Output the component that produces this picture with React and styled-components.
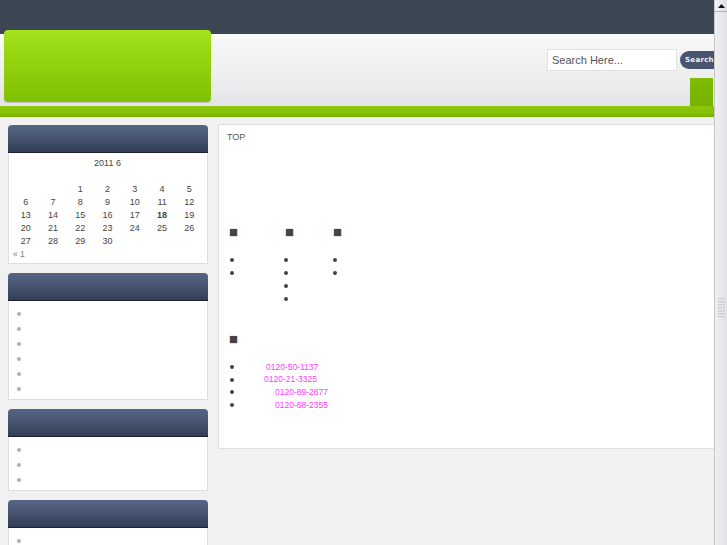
import styled, { createGlobalStyle } from "styled-components";

const GlobalStyle = createGlobalStyle`
    html, body {
        margin: 0;
        padding: 0;
        overflow: hidden;
    }
    body {
        font-family: "Liberation Sans", Arial, sans-serif;
        background: #f1f1f1;
    }
`;

const Page = styled.div`
    display: flex;
    height: 100vh;
`;

const Site = styled.div`
    flex: 1;
    min-width: 0;
    overflow: hidden;
    background: #f1f1f1;
`;

const TopBar = styled.div`
    height: 34px;
    background: #3d4754;
`;

const Header = styled.div`
    height: 72px;
    display: flex;
    justify-content: space-between;
    background: linear-gradient(to bottom, #f9f9f9 0%, #f0f0f1 50%, #e4e4e6 100%);
`;

const Logo = styled.div`
    width: 207px;
    height: 72px;
    margin: -4px 0 0 4px;
    border-radius: 4px;
    background: linear-gradient(to bottom, #a3e31d 0%, #92d20e 45%, #80c003 100%);
    box-shadow: 0 1px 1px rgba(0, 0, 0, 0.15);
`;

const HeaderRight = styled.div`
    display: flex;
    flex-direction: column;
    justify-content: space-between;
    align-items: flex-end;
`;

const SearchRow = styled.form`
    display: flex;
    align-items: center;
    gap: 3px;
    margin: 15px -10px 0 0;
`;

const SearchInput = styled.input`
    box-sizing: border-box;
    width: 130px;
    height: 22px;
    padding: 0 4px;
    border: 1px solid #e2e2e2;
    background: #fff;
    font-family: "Liberation Sans", Arial, sans-serif;
    font-size: 11px;
    color: #555;
    outline: none;

    &::placeholder {
        color: #555;
    }
`;

const SearchButton = styled.button`
    height: 18px;
    width: 44px;
    padding: 0 0 0 5px;
    border: none;
    border-radius: 9px;
    background: #495570;
    color: #f2f2f2;
    font-family: "DejaVu Sans", Verdana, sans-serif;
    font-size: 7px;
    font-weight: bold;
    letter-spacing: 0.3px;
    text-align: left;
`;

const NavTab = styled.div`
    width: 23px;
    height: 28px;
    margin-right: 1px;
    background: linear-gradient(to bottom, #80bc04, #76b200);
`;

const GreenStripe = styled.div`
    height: 11px;
    background: linear-gradient(to bottom, #8ec60c 0%, #86c008 60%, #74ad00 100%);
`;

const Body = styled.div`
    display: flex;
    align-items: flex-start;
    gap: 10px;
    padding: 7px 0 0 8px;
`;

const Sidebar = styled.div`
    width: 200px;
    flex-shrink: 0;
    display: flex;
    flex-direction: column;
    gap: 9px;
    padding-top: 1px;
`;

const Widget = styled.div`
    border: 1px solid #dedede;
    border-top: none;
    border-radius: 4px 4px 0 0;
    background: #fff;
`;

const WidgetHead = styled.div`
    height: 27px;
    margin: 0 -1px;
    border-radius: 4px 4px 0 0;
    background: linear-gradient(to bottom, #566686 0%, #45536f 50%, #313d55 100%);
    border-bottom: 1px solid #1c2230;
`;

const Calendar = styled.div`
    padding: 4px 4px 2px 3px;
    font-size: 9px;
    color: #444;
`;

const Caption = styled.div`
    text-align: center;
    line-height: 13px;
`;

const DayGrid = styled.div`
    display: grid;
    grid-template-columns: repeat(7, 1fr);
    line-height: 13px;
    text-align: center;
`;

const Day = styled.span`
    font-weight: ${(p) => (p.$today ? "bold" : "normal")};
`;

const PrevLink = styled.div`
    line-height: 13px;
    padding-left: 1px;
    color: #777;
    font-size: 8.5px;
`;

const LinkList = styled.ul`
    list-style: none;
    margin: 0;
    padding: 6px 0 2px 0;
`;

const LinkItem = styled.li`
    height: 15px;
    position: relative;

    &::before {
        content: "";
        position: absolute;
        left: 8px;
        top: 5px;
        width: 4px;
        height: 4px;
        border-radius: 50%;
        background: #b0b0b0;
    }
`;

const Content = styled.div`
    flex: 1;
    margin-right: -2px;
    border: 1px solid #dedede;
    background: #fff;
    padding: 6px 10px 37px 10px;
    font-size: 9px;
    color: #555;
`;

const TopLabel = styled.div`
    line-height: 12px;
    margin-left: -2px;
`;

const Columns = styled.div`
    display: flex;
    margin-top: 83px;
`;

const Column = styled.div`
    width: ${(p) => p.$width}px;
`;

const Square = styled.div`
    font-family: "DejaVu Sans", sans-serif;
    font-size: 9.5px;
    line-height: 12px;
    color: #444;
    margin-top: ${(p) => p.$top || 0}px;
`;

const DotList = styled.ul`
    list-style: none;
    margin: 15.5px 0 0 0;
    padding: 0;
`;

const DotItem = styled.li`
    position: relative;
    height: ${(p) => p.$step}px;
    line-height: ${(p) => p.$step}px;

    &::before {
        content: "";
        position: absolute;
        left: ${(p) => p.$dot}px;
        top: 50%;
        width: 4px;
        height: 4px;
        margin-top: -2px;
        border-radius: 50%;
        background: #444;
    }
`;

const Phone = styled.span`
    margin-left: ${(p) => p.$indent}px;
    color: #ff3cff;
    font-size: 8.5px;
`;

const ScrollBar = styled.div`
    width: 12px;
    flex-shrink: 0;
    display: flex;
    flex-direction: column;
    background: #e8e8ec;
    border-left: 1px solid #c6c6ca;
`;

const ArrowButton = styled.div`
    height: 11px;
    display: flex;
    align-items: center;
    justify-content: center;
    background: linear-gradient(to right, #f4f4f6, #dedee2);
    border-bottom: 1px solid #b4b4b8;
`;

const Thumb = styled.div`
    flex: 1;
    display: flex;
    justify-content: center;
    background: linear-gradient(to right, #f0f0f3, #e2e2e6);
`;

const Grip = styled.svg`
    margin-top: 286px;
`;

const weeks = [
    ["", "", "1", "2", "3", "4", "5"],
    ["6", "7", "8", "9", "10", "11", "12"],
    ["13", "14", "15", "16", "17", "18", "19"],
    ["20", "21", "22", "23", "24", "25", "26"],
    ["27", "28", "29", "30", "", "", ""],
];

const phones = [
    { number: "0120-50-1137", indent: 37 },
    { number: "0120-21-3325", indent: 35 },
    { number: "0120-89-2877", indent: 46 },
    { number: "0120-68-2355", indent: 46 },
];

function App() {
    return (
        <>
            <GlobalStyle />
            <Page>
                <Site>
                    <TopBar />
                    <Header>
                        <Logo />
                        <HeaderRight>
                            <SearchRow onSubmit={(e) => e.preventDefault()}>
                                <SearchInput placeholder="Search Here..." />
                                <SearchButton type="submit">Search</SearchButton>
                            </SearchRow>
                            <NavTab />
                        </HeaderRight>
                    </Header>
                    <GreenStripe />
                    <Body>
                        <Sidebar>
                            <Widget>
                                <WidgetHead />
                                <Calendar>
                                    <Caption>2011 6</Caption>
                                    <DayGrid>
                                        {Array.from({ length: 7 }).map((_, i) => (
                                            <span key={"h" + i}>&nbsp;</span>
                                        ))}
                                        {weeks.flat().map((d, i) => (
                                            <Day key={i} $today={d === "18"}>
                                                {d}
                                            </Day>
                                        ))}
                                    </DayGrid>
                                    <PrevLink>« 1</PrevLink>
                                </Calendar>
                            </Widget>
                            <Widget>
                                <WidgetHead />
                                <LinkList>
                                    {[0, 1, 2, 3, 4, 5].map((i) => (
                                        <LinkItem key={i} />
                                    ))}
                                </LinkList>
                            </Widget>
                            <Widget>
                                <WidgetHead />
                                <LinkList>
                                    {[0, 1, 2].map((i) => (
                                        <LinkItem key={i} />
                                    ))}
                                </LinkList>
                            </Widget>
                            <Widget>
                                <WidgetHead />
                                <LinkList>
                                    {[0, 1, 2].map((i) => (
                                        <LinkItem key={i} />
                                    ))}
                                </LinkList>
                            </Widget>
                        </Sidebar>
                        <Content>
                            <TopLabel>TOP</TopLabel>
                            <Columns>
                                <Column $width={56}>
                                    <Square>■</Square>
                                    <DotList>
                                        <DotItem $step={13} $dot={1} />
                                        <DotItem $step={13} $dot={1} />
                                    </DotList>
                                </Column>
                                <Column $width={48}>
                                    <Square>■</Square>
                                    <DotList>
                                        <DotItem $step={13} $dot={-1} />
                                        <DotItem $step={13} $dot={-1} />
                                        <DotItem $step={13} $dot={-1} />
                                        <DotItem $step={13} $dot={-1} />
                                    </DotList>
                                </Column>
                                <Column $width={40}>
                                    <Square>■</Square>
                                    <DotList>
                                        <DotItem $step={13} $dot={0} />
                                        <DotItem $step={13} $dot={0} />
                                    </DotList>
                                </Column>
                            </Columns>
                            <Square $top={27.5}>■</Square>
                            <DotList>
                                {phones.map((p) => (
                                    <DotItem key={p.number} $step={12.7} $dot={1}>
                                        <Phone $indent={p.indent}>{p.number}</Phone>
                                    </DotItem>
                                ))}
                            </DotList>
                        </Content>
                    </Body>
                </Site>
                <ScrollBar>
                    <ArrowButton>
                        <svg width="7" height="4" viewBox="0 0 7 4">
                            <path d="M0 4 L3.5 0 L7 4 Z" fill="#111" />
                        </svg>
                    </ArrowButton>
                    <Thumb>
                        <Grip width="7" height="20" viewBox="0 0 7 20">
                            {[0, 1, 2, 3, 4, 5, 6].map((r) =>
                                [0, 1, 2].map((c) => (
                                    <rect
                                        key={r + "-" + c}
                                        x={c * 2.5}
                                        y={r * 3}
                                        width="1.5"
                                        height="1.5"
                                        fill="#c2c2c8"
                                    />
                                ))
                            )}
                        </Grip>
                    </Thumb>
                </ScrollBar>
            </Page>
        </>
    );
}

export default App;
